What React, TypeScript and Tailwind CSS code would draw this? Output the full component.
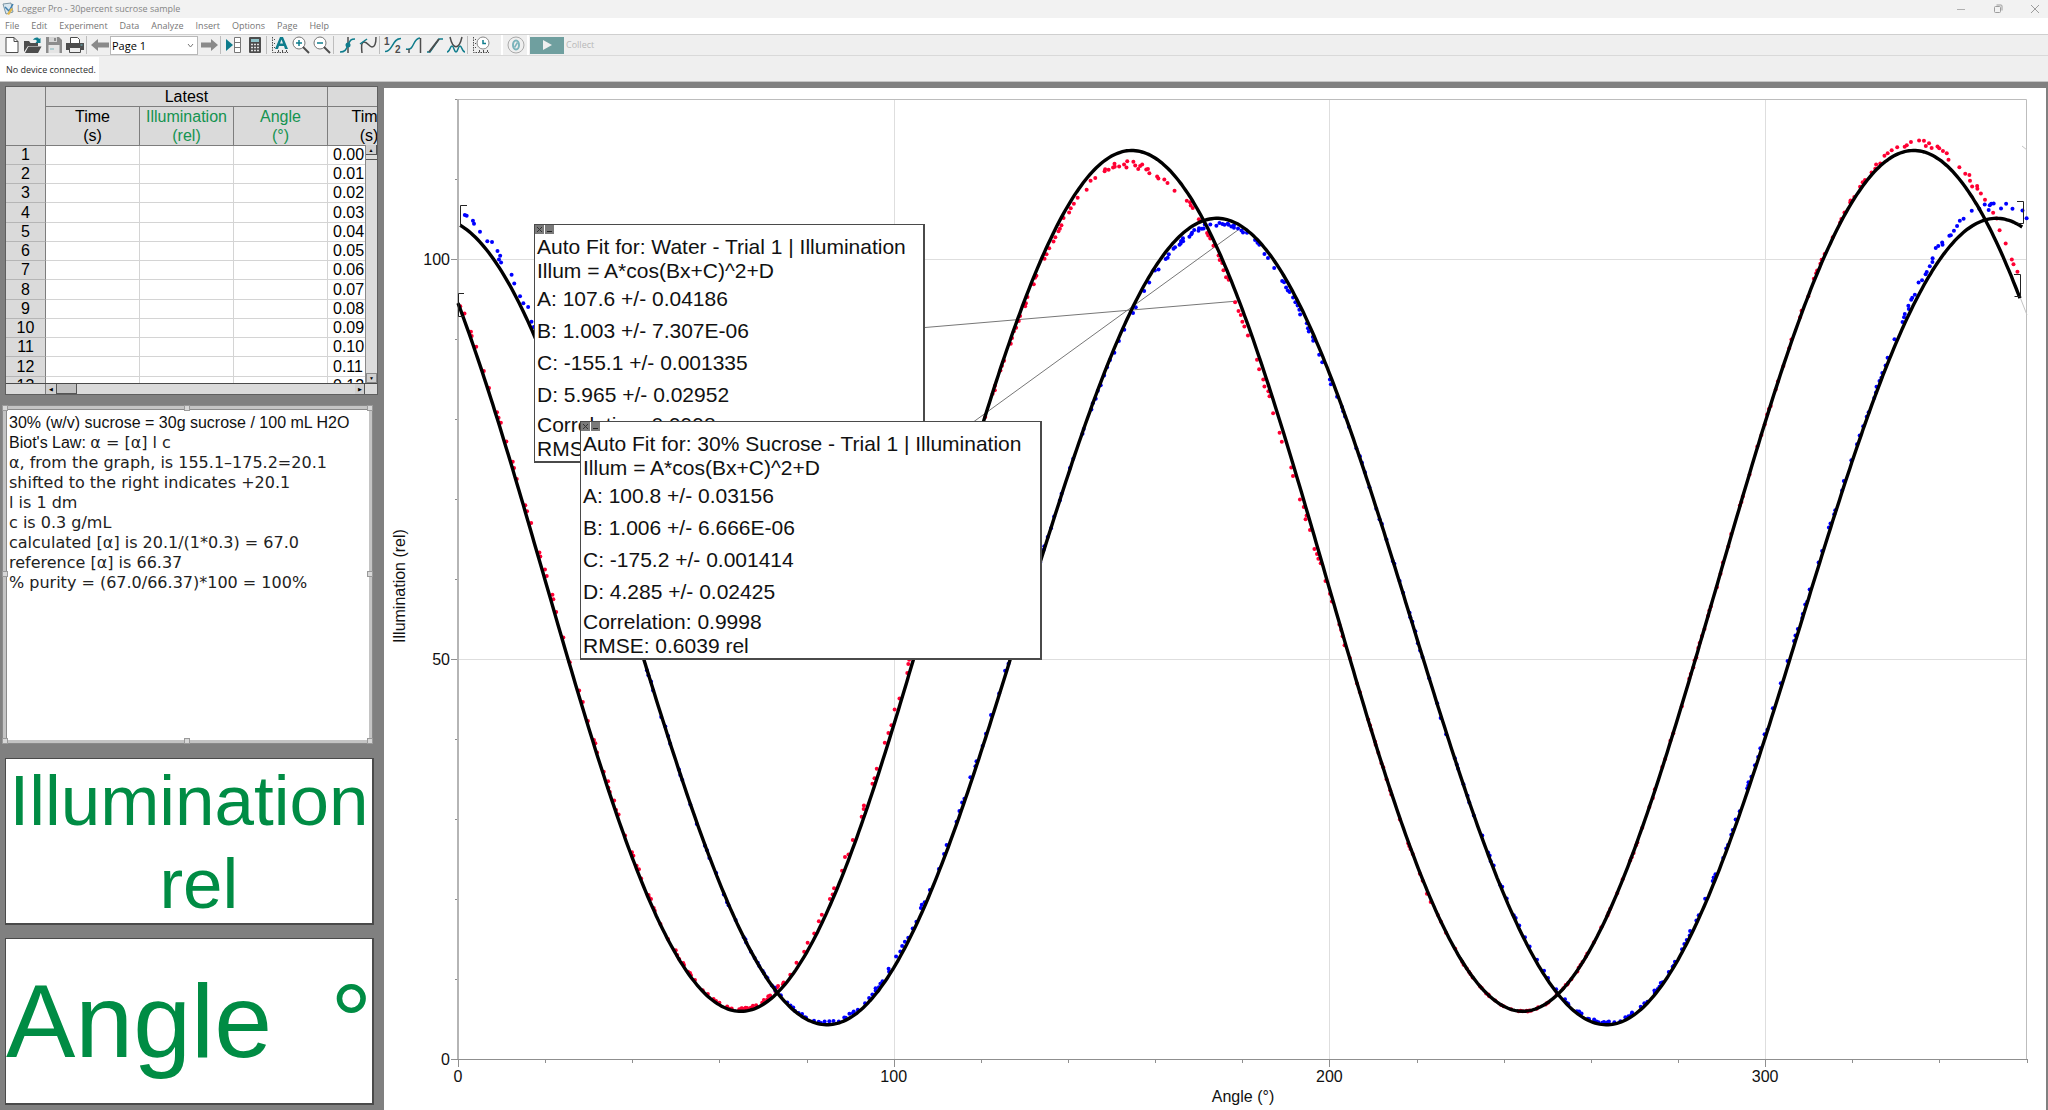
import type { ReactNode } from "react";

const TEAL = "#0e7c8c";
const DARK = "#4d4d4d";

const menus = ["File", "Edit", "Experiment", "Data", "Analyze", "Insert", "Options", "Page", "Help"];

const rows = [
  "0.00", "0.01", "0.02", "0.03", "0.04", "0.05", "0.06",
  "0.07", "0.08", "0.09", "0.10", "0.11", "0.12",
];

const notes = [
  "α, from the graph, is 155.1–175.2=20.1",
  "shifted to the right indicates +20.1",
  "l is 1 dm",
  "c is 0.3 g/mL",
  "calculated [α] is 20.1/(1*0.3) = 67.0",
  "reference [α] is 66.37",
  "% purity = (67.0/66.37)*100 = 100%",
];

/* ---------- Toolbar ---------- */

function ToolButton({ label, children }: { label: string; children: ReactNode }) {
  return (
    <button type="button" aria-label={label} className="flex h-5 w-[21px] items-center justify-center">
      <svg width="20" height="20" viewBox="0 0 20 20" fill="none">
        {children}
      </svg>
    </button>
  );
}

function Separator() {
  return <span className="ml-px h-[18px] w-[3px] border-l border-[#bdbdbd]" />;
}

function RulerAxes() {
  return (
    <g stroke={DARK} strokeWidth="1">
      <path d="M2.5 2v15.5H18" strokeDasharray="1.5 1" />
      <path d="M4 4.5h1M4 8.5h1M4 12.5h1M8.5 15v2M12.5 15v2M16.5 15v2" />
    </g>
  );
}

function Toolbar() {
  return (
    <div className="flex h-[21px] items-center border-b border-[#d9d9d9] bg-[#efefef] pl-px">
      <ToolButton label="New">
        <path d="M4 2.5h8l4 4v11H4z" fill="#fff" stroke={DARK} />
        <path d="M12 2.5v4h4" stroke={DARK} />
      </ToolButton>
      <ToolButton label="Open">
        <path d="M1 6h5l1.500 2H15v3H5l-4 6z" fill={DARK} />
        <path d="M5.500 11.500H18.500L15 18H2z" fill={DARK} />
        <path d="M10 5c2-3 5-3 6-1l1.500-1v5h-5l1.500-2c-1-1.500-2-1.500-4-1z" fill={TEAL} />
      </ToolButton>
      <ToolButton label="Save">
        <path d="M2 2h13l3 3v13H2z" fill="#8c8c8c" />
        <path d="M5 2h8v5H5z" fill="#d6d6d6" />
        <path d="M10 3h2v3h-2z" fill="#8c8c8c" />
        <path d="M4.500 10h11v8h-11z" fill="#e4e4e4" />
        <path d="M6 14h4" stroke="#7fb5bc" />
      </ToolButton>
      <ToolButton label="Print">
        <path d="M5.500 2.500h7l2 2v4h-9z" fill="#fff" stroke={DARK} />
        <path d="M1 8h18v7H1z" fill={DARK} />
        <path d="M4.500 12.500h11v5h-11z" fill="#eee" stroke={DARK} />
        <path d="M15.500 10h2" stroke="#6fc4cf" />
      </ToolButton>
      <Separator />
      <ToolButton label="Previous page">
        <path d="M1 10l7-6v3.500h11v5H8V16z" fill="#8a8a8a" />
      </ToolButton>
      <div className="relative h-[19px] w-[88px]">
        <select
          aria-label="Page"
          className="block h-[19px] w-full appearance-none border border-[#b8b8b8] bg-white py-0 pl-px font-['Open_Sans',sans-serif] text-[11px] leading-[17px] text-black"
        >
          <option>Page 1</option>
        </select>
        <svg className="pointer-events-none absolute right-1 top-1.5" width="7" height="7" viewBox="0 0 7 7" fill="none">
          <path d="M1 2l2.500 3L6 2" stroke="#777" />
        </svg>
      </div>
      <ToolButton label="Next page">
        <path d="M19 10l-7-6v3.500H2v5h10V16z" fill="#8a8a8a" />
      </ToolButton>
      <Separator />
      <ToolButton label="Data browser">
        <path d="M2 4l7 6-7 6z" fill={TEAL} />
        <path d="M10.500 2.500h6v15h-6zM10.500 7.500h6M10.500 12.500h6" fill="#fff" stroke="#777" />
      </ToolButton>
      <ToolButton label="Calculator">
        <rect x="4" y="2" width="12" height="16" rx="1" fill={DARK} />
        <path d="M6 4h8v3H6z" fill="#8fc3c9" />
        <path d="M6 9.500h8M6 12.500h8M6 15.500h8" stroke="#ddd" strokeWidth="1.500" strokeDasharray="2 1" />
      </ToolButton>
      <Separator />
      <ToolButton label="Autoscale">
        <RulerAxes />
        <path d="M5 14l5-12h3l5 12h-3l-1-3H9l-1 3zM10 8.500h3l-1.500-4z" fill={TEAL} fillRule="evenodd" />
      </ToolButton>
      <ToolButton label="Zoom in">
        <circle cx="8" cy="8" r="6" fill="#fff" stroke="#777" />
        <path d="M5 8h6M8 5v6" stroke={TEAL} strokeWidth="1.500" />
        <path d="M12 12l6 6" stroke={DARK} strokeWidth="2" />
      </ToolButton>
      <ToolButton label="Zoom out">
        <circle cx="8" cy="8" r="6" fill="#fff" stroke="#777" />
        <path d="M5 8h6" stroke={TEAL} strokeWidth="1.500" />
        <path d="M12 12l6 6" stroke={DARK} strokeWidth="2" />
      </ToolButton>
      <Separator />
      <ToolButton label="Examine">
        <path d="M11 2v16" stroke={DARK} strokeWidth="1.500" />
        <path d="M3 17c5 0 6-2 8-7s3-6 7-6" stroke={TEAL} strokeWidth="1.500" />
        <circle cx="11" cy="10" r="2.500" fill={TEAL} />
      </ToolButton>
      <ToolButton label="Tangent">
        <path d="M4 18c-1-9 0-11 2-11 4 0 5 5 8 5s4-3 4-10" stroke={DARK} strokeWidth="1.500" />
        <path d="M2 9l7-5" stroke={TEAL} strokeWidth="1.500" />
      </ToolButton>
      <Separator />
      <ToolButton label="Statistics">
        <path d="M2 16.500c8 0 7-13 16-13" stroke={TEAL} strokeWidth="1.500" />
        <text x="1" y="10" fontSize="10" fontWeight="700" fontFamily="Liberation Sans" fill={DARK}>1</text>
        <text x="12" y="18" fontSize="10" fontWeight="700" fontFamily="Liberation Sans" fill={DARK}>2</text>
      </ToolButton>
      <ToolButton label="Integral">
        <path d="M2 14c9 2 6-10 14-11" stroke={TEAL} strokeWidth="1.500" />
        <path d="M5 14v4M16.500 3v15" stroke={DARK} strokeWidth="1.500" />
      </ToolButton>
      <ToolButton label="Linear fit">
        <path d="M2 17h3l9-13h4" stroke={TEAL} strokeWidth="1.500" />
        <path d="M4 17L14 4" stroke={DARK} strokeWidth="2" />
      </ToolButton>
      <ToolButton label="Curve fit">
        <path d="M4 2c3 13 9 13 12 0" stroke={DARK} strokeWidth="1.500" />
        <path d="M1 17c3 0 3-6 5-6s2 6 4 6 2-6 4-6 2 6 5 6" stroke={TEAL} strokeWidth="1.500" />
      </ToolButton>
      <Separator />
      <ToolButton label="Data collection">
        <RulerAxes />
        <circle cx="12" cy="8" r="6" fill="#fff" stroke="#888" />
        <path d="M12 5v3.500h3" stroke={TEAL} strokeWidth="1.500" />
      </ToolButton>
      <span className="ml-2.5 mr-0.5 h-5 w-0.5 bg-white" />
      <ToolButton label="Zero">
        <circle cx="10" cy="10" r="8" stroke="#aaa" />
        <ellipse cx="10" cy="10" rx="3" ry="4.500" stroke="#7bb4bb" strokeWidth="2" />
        <path d="M8.500 12.500l3-5" stroke="#7bb4bb" strokeWidth="1.500" />
      </ToolButton>
      <span className="mx-px h-5 w-0.5 bg-white" />
      <button
        type="button"
        className="flex items-center gap-0.5 font-['Open_Sans',sans-serif] text-[9px] text-[#b8b8b8]"
      >
        <span className="flex h-[17px] w-[34px] items-center justify-center bg-[#6f9f9f]">
          <svg width="10" height="10" viewBox="0 0 10 10" fill="#efefef">
            <path d="M1 0l9 5-9 5z" />
          </svg>
        </span>
        Collect
      </button>
    </div>
  );
}

function WindowBar() {
  return (
    <header className="font-['Open_Sans',sans-serif]">
      <div className="flex h-[18px] items-center bg-[#f2f2f2] pl-0.5 pr-2">
        <svg width="12" height="14" viewBox="0 0 12 14" fill="none">
          <path d="M1 2l8-1 2 9-7 2z" fill="#d7e6ef" stroke="#7c95a4" />
          <path d="M3 5l4 4 4-7" stroke="#3f7fae" strokeWidth="1.500" />
          <path d="M5 12l4-6 2 1-4 6z" fill="#e3b84e" />
        </svg>
        <h1 className="ml-[3px] text-[9px] leading-4 text-[#858585]">Logger Pro - 30percent sucrose sample</h1>
        <div className="ml-auto flex items-center gap-[27px]">
          <button type="button" aria-label="Minimize">
            <svg width="10" height="10" viewBox="0 0 10 10" stroke="#b0b0b0"><path d="M1 5.500h8" /></svg>
          </button>
          <button type="button" aria-label="Restore">
            <svg width="10" height="10" viewBox="0 0 10 10" stroke="#9c9c9c" fill="none">
              <rect x="1.500" y="2.500" width="6" height="6" rx="1" />
              <path d="M3.500 1h4.500q1 0 1 1v4.500" />
            </svg>
          </button>
          <button type="button" aria-label="Close">
            <svg width="10" height="10" viewBox="0 0 10 10" stroke="#9c9c9c"><path d="M1 1l8 8M9 1l-8 8" /></svg>
          </button>
        </div>
      </div>
      <nav className="flex h-[17px] items-center gap-3 border-b border-[#cfcfcf] bg-white pl-[5px] text-[9px] leading-4 text-[#757575]">
        {menus.map((m) => (
          <button key={m} type="button">{m}</button>
        ))}
      </nav>
      <Toolbar />
      <div className="flex h-[26px] items-center border-b border-[#c4c4c4] bg-[#efefef]">
        <p className="h-6 w-[99px] bg-white pl-1.5 text-[9px] leading-[26px] text-[#2c2c2c]">No device connected.</p>
      </div>
    </header>
  );
}

/* ---------- Left column ---------- */

function DataTable() {
  const head = "border-b border-r border-[#7d7d7d] font-normal";
  return (
    <section className="relative ml-[5px] h-[309px] w-[373px] overflow-hidden border border-[#5f5f5f] bg-[#dadada]">
      <div className="h-[296px] overflow-hidden">
        <table className="w-[405px] table-fixed border-separate border-spacing-0 bg-white text-base leading-[18px]">
          <colgroup>
            <col className="w-10" />
            <col className="w-[94px]" />
            <col className="w-[94px]" />
            <col className="w-[94px]" />
            <col className="w-[83px]" />
          </colgroup>
          <thead className="bg-[#dadada]">
            <tr className="h-5">
              <th rowSpan={2} aria-label="Row" className={head} />
              <th colSpan={3} scope="colgroup" className={head}>Latest</th>
              <th className={head} />
            </tr>
            <tr className="h-[38px] leading-[19px]">
              <th scope="col" className={head}>Time<br />(s)</th>
              <th scope="col" className={`${head} text-[#149350]`}>Illumination<br />(rel)</th>
              <th scope="col" className={`${head} text-[#149350]`}>Angle<br />(°)</th>
              <th scope="col" className={head}>Time<br />(s)</th>
            </tr>
          </thead>
          <tbody>
            {rows.map((time, i) => (
              <tr key={time} className="h-[19px] nth-[4n]:h-5">
                <th scope="row" className="border-b border-r border-b-[#b5b5b5] border-r-[#7d7d7d] bg-[#dadada] font-normal">
                  {i + 1}
                </th>
                <td className="border-b border-r border-[#d4d4d4]" />
                <td className="border-b border-r border-[#d4d4d4]" />
                <td className="border-b border-r border-[#d4d4d4]" />
                <td className="border-b border-[#d4d4d4] pl-[5px]">{time}</td>
              </tr>
            ))}
          </tbody>
        </table>
      </div>
      {/* vertical scroll bar lies over the last column */}
      <div className="absolute bottom-[11px] right-0 top-[58px] flex w-3 flex-col border-l border-[#8a8a8a] bg-[#dcdcdc]">
        <button type="button" aria-label="Scroll up" className="h-2.5 border-b border-r border-[#555] bg-[#cfcfcf] text-[5px] leading-[10px]">▲</button>
        <span className="mt-0.5 h-[3px] border-b border-[#555]" />
        <button type="button" aria-label="Scroll down" className="mt-auto h-2.5 border border-[#8a8a8a] bg-[#cfcfcf] text-[5px] leading-[8px]">▼</button>
      </div>
      <div className="flex h-[11px] border-t border-[#4a4a4a]">
        <span className="w-10 border-r border-[#7d7d7d]" />
        <button type="button" aria-label="Scroll left" className="w-[11px] border-r border-[#555] bg-[#cfcfcf] text-[5px] leading-[10px]">◀</button>
        <span className="w-5 border-b border-r border-[#555] bg-[#c0c0c0]" />
        <button type="button" aria-label="Scroll right" className="ml-auto mr-3 w-2.5 border-r border-[#555] bg-[#cfcfcf] text-[5px] leading-[10px]">▶</button>
      </div>
    </section>
  );
}

function Handle({ place }: { place: string }) {
  return <span className={`absolute size-[6px] border border-[#9a9a9a] bg-[#d8d8d8] ${place}`} />;
}

function NotesPanel() {
  return (
    <section className="relative ml-[2px] mt-[10px] h-[339px] w-[371px] border-4 border-[#c4c4c4] bg-white outline-1 -outline-offset-1 outline-[#8a8a8a]">
      <div className="h-full border-l border-t border-[#8a8a8a] pl-0.5 pt-[3px] font-['DejaVu_Sans',sans-serif] text-base leading-5 text-[#222]">
        <p className="font-['Liberation_Sans',sans-serif] text-[#111]">
          30% (w/v) sucrose = 30g sucrose / 100 mL H2O
        </p>
        <p>
          <span className="font-['Liberation_Sans',sans-serif] text-[#111]">Biot's Law: </span>
          α = [α] l c
        </p>
        {notes.map((line) => (
          <p key={line}>{line}</p>
        ))}
      </div>
      <Handle place="-left-1 -top-1" />
      <Handle place="left-[178px] -top-1" />
      <Handle place="-right-1 -top-1" />
      <Handle place="-left-1 top-[162px]" />
      <Handle place="-right-1 top-[162px]" />
      <Handle place="-left-1 -bottom-1" />
      <Handle place="left-[178px] -bottom-1" />
      <Handle place="-right-1 -bottom-1" />
    </section>
  );
}

function Meters() {
  const box = "ml-[5px] h-[167px] w-[369px] border border-b-2 border-r-2 border-[#4a4a4a] bg-white text-[#008c44]";
  return (
    <>
      <section className={`${box} mt-[14px] overflow-hidden text-center text-[71px] leading-[83px]`}>
        <p>Illumination</p>
        <p className="whitespace-pre"> rel</p>
      </section>
      <section className={`${box} mt-[13px] flex items-center justify-between text-[104px] leading-none`}>
        <span>Angle</span>
        <span>°</span>
      </section>
    </>
  );
}

/* ---------- Graph ---------- */

const X0 = 74;
const Y0 = 971;
const TOP = 11;
const RIGHT = 1643;
const px = (deg: number) => X0 + deg * 4.357;
const py = (v: number) => Y0 - v * 8;

type Fit = { a: number; b: number; c: number; d: number };
const water: Fit = { a: 107.6, b: 1.003, c: 155.1, d: 5.965 };
const sucrose: Fit = { a: 100.8, b: 1.006, c: 175.2, d: 4.285 };

const evaluate = (f: Fit, x: number) =>
  f.a * Math.cos(((f.b * x - f.c) * Math.PI) / 180) ** 2 + f.d;

function curve(f: Fit, from: number, to: number) {
  const pts: string[] = [];
  for (let x = from; x <= to; x += 0.5) {
    pts.push(`${px(x).toFixed(1)},${py(evaluate(f, x)).toFixed(1)}`);
  }
  return pts.join(" ");
}

// [angle, distance of the readings from the fit] - positive lies above the curve
const waterDrift = [
  [0, 2], [20, 2], [50, 1], [65, 2], [75, 3], [95, 3], [108, 3], [116, 1], [124, -1], [132, -2],
  [140, -4], [147, -8], [152, -13], [158, -14], [163, -11], [168, -5], [172, -2], [178, -3],
  [192, -3], [200, -2], [206, 0], [218, 0], [222, -1], [228, 0], [300, 0], [318, 1], [325, 2],
  [330, 5], [335, 9], [341, 8], [347, 8], [354, 10], [359, 7],
];
const sucroseDrift = [
  [0, 10], [3, 8], [10, 6], [17, 4], [30, 2], [45, 0], [70, 0], [82, 2], [96, 3], [110, 2],
  [125, 1], [140, 0], [150, -1], [160, -3], [167, -6], [173, -6], [180, -3], [190, -3],
  [200, -2], [205, 0], [220, 0], [222, -1], [228, 0], [260, 2], [270, 2], [300, 1], [325, 1],
  [333, 3], [338, 6], [345, 10], [352, 12], [359, 12],
];

function drift(table: number[][], x: number) {
  const i = table.findIndex((p) => p[0] > x);
  if (i < 1) return table[table.length - 1][1];
  const [x1, y1] = table[i - 1];
  const [x2, y2] = table[i];
  return y1 + ((y2 - y1) * (x - x1)) / (x2 - x1);
}

function readings(f: Fit, table: number[][], last: number, seed: number) {
  let s = seed;
  const rnd = () => {
    s = (s * 16807) % 2147483647;
    return s / 2147483647;
  };
  const dots: { x: number; y: number }[] = [];
  // readings bunch up wherever the polarizer was turned slowly
  for (let deg = 0.3; deg < last; deg += rnd() < 0.7 ? 0.2 + rnd() * 0.7 : 1 + rnd()) {
    const slope = ((evaluate(f, deg + 0.5) - evaluate(f, deg - 0.5)) * 8) / 4.357;
    const len = Math.hypot(1, slope);
    const off = drift(table, deg);
    const d = off + (rnd() - 0.5) * (1.2 + Math.abs(off) * 0.5);
    dots.push({ x: px(deg) - (d * slope) / len, y: py(evaluate(f, deg)) - d / len });
  }
  return dots;
}

const waterDots = readings(water, waterDrift, 357, 4711);
const sucroseDots = readings(sucrose, sucroseDrift, 359, 90210);

const every = (step: number, max: number) =>
  Array.from({ length: Math.floor(max / step) + 1 }, (_, i) => i * step);

function Chart() {
  return (
    <svg
      viewBox="0 0 1662 1022"
      className="block h-auto w-full font-['Liberation_Sans',Arial,sans-serif]"
      fill="none"
      role="img"
      aria-label="Illumination against angle"
    >
      {[100, 200, 300].map((v) => (
        <path key={v} d={`M${Math.round(px(v))}.5 ${TOP}V${Y0}`} stroke="#dedede" />
      ))}
      {[50, 100].map((v) => (
        <path key={v} d={`M${X0} ${py(v)}.5H${RIGHT}`} stroke="#dedede" />
      ))}
      <path d={`M${X0} ${TOP}.5H${RIGHT - 0.5}V${Y0}`} stroke="#bdbdbd" />
      {every(10, 120).map((v) => (
        <path key={v} d={`M${v % 50 === 0 ? X0 - 7 : X0 - 3} ${py(v)}.5H${X0}`} stroke="#8f8f8f" />
      ))}
      {every(20, 360).map((v) => (
        <path key={v} d={`M${Math.round(px(v))}.5 ${Y0}v${v % 100 === 0 ? 8 : 4}`} stroke="#8f8f8f" />
      ))}
      <path d={`M${X0} ${TOP}V${Y0}`} stroke="#b5b5b5" strokeWidth="2" />
      <path d={`M${X0} ${Y0}.5H${RIGHT}`} stroke="#8f8f8f" />

      {/* callout leaders */}
      <path d="M541 239.500L854 213M590 333.500L854 142" stroke="#777" />

      <g fill="#ff0033">
        {waterDots.map((p, i) => (
          <circle key={i} cx={p.x} cy={p.y} r="2" />
        ))}
      </g>
      <g fill="#0000ff">
        {sucroseDots.map((p, i) => (
          <circle key={i} cx={p.x} cy={p.y} r="2" />
        ))}
      </g>

      <path d={`M1636 209L${RIGHT} 227M1638 58L${RIGHT} 62`} stroke="#c4c4c4" />
      <polyline points={curve(water, 0, 358.5)} stroke="#000" strokeWidth="3.4" />
      <polyline points={curve(sucrose, 0.5, 359)} stroke="#000" strokeWidth="3.4" />

      {/* fit range brackets */}
      <path
        d="M83 117.500h-6.500v21M80 205.500h-5.500v23h5M1633 113.500h6.500v22h-6M1630 186.500h6.500v22h-6"
        stroke="#222"
      />

      <g fill="#111" fontSize="16">
        {[0, 50, 100].map((v) => (
          <text key={v} x={X0 - 8} y={py(v) + 6} textAnchor="end">{v}</text>
        ))}
        {[0, 100, 200, 300].map((v) => (
          <text key={v} x={px(v)} y={Y0 + 23} textAnchor="middle">{v}</text>
        ))}
        <text x="859" y="1014" textAnchor="middle">Angle (°)</text>
        <text transform="translate(21 498) rotate(-90)" textAnchor="middle">Illumination (rel)</text>
      </g>
    </svg>
  );
}

type FitBoxProps = { title: string; params: string[]; correlation: string; rmse: string; place: string };

function FitBox({ title, params, correlation, rmse, place }: FitBoxProps) {
  return (
    <aside
      className={`absolute h-[239px] border border-b-2 border-r-2 border-[#4a4a4a] bg-white pl-0.5 pt-2.5 text-[21px] leading-6 text-[#111] ${place}`}
    >
      <div className="absolute left-0 top-0 flex gap-px">
        <button type="button" aria-label="Close fit" className="size-[9px] bg-[#7a7a7a]">
          <svg width="9" height="9" viewBox="0 0 9 9" stroke="#333"><path d="M2 2l5 5M7 2L2 7" /></svg>
        </button>
        <button type="button" aria-label="Collapse fit" className="size-[9px] bg-[#7a7a7a]">
          <svg width="9" height="9" viewBox="0 0 9 9" stroke="#222"><path d="M2 6.500h5" /></svg>
        </button>
      </div>
      <p className="whitespace-nowrap">{title}</p>
      <p>Illum = A*cos(Bx+C)^2+D</p>
      <div className="mb-0.5 leading-8">
        {params.map((p) => (
          <p key={p}>{p}</p>
        ))}
      </div>
      <p>Correlation: {correlation}</p>
      <p>RMSE: {rmse}</p>
    </aside>
  );
}

export default function App() {
  return (
    <div className="flex min-h-screen flex-col bg-[#808080] font-['Liberation_Sans',Arial,sans-serif] text-black">
      <WindowBar />
      <main className="flex flex-1">
        <div className="w-[384px] shrink-0 pt-1">
          <DataTable />
          <NotesPanel />
          <Meters />
        </div>
        <section className="relative mr-0.5 mt-1.5 min-w-0 flex-1 bg-white">
          <Chart />
          <FitBox
            title="Auto Fit for: Water - Trial 1 | Illumination"
            params={[
              "A: 107.6 +/- 0.04186",
              "B: 1.003 +/- 7.307E-06",
              "C: -155.1 +/- 0.001335",
              "D: 5.965 +/- 0.02952",
            ]}
            correlation="0.9998"
            rmse="0.7450 rel"
            place="left-[150px] top-[136px] w-[391px]"
          />
          <FitBox
            title="Auto Fit for: 30% Sucrose - Trial 1 | Illumination"
            params={[
              "A: 100.8 +/- 0.03156",
              "B: 1.006 +/- 6.666E-06",
              "C: -175.2 +/- 0.001414",
              "D: 4.285 +/- 0.02425",
            ]}
            correlation="0.9998"
            rmse="0.6039 rel"
            place="left-[196px] top-[333px] w-[462px]"
          />
        </section>
      </main>
    </div>
  );
}
